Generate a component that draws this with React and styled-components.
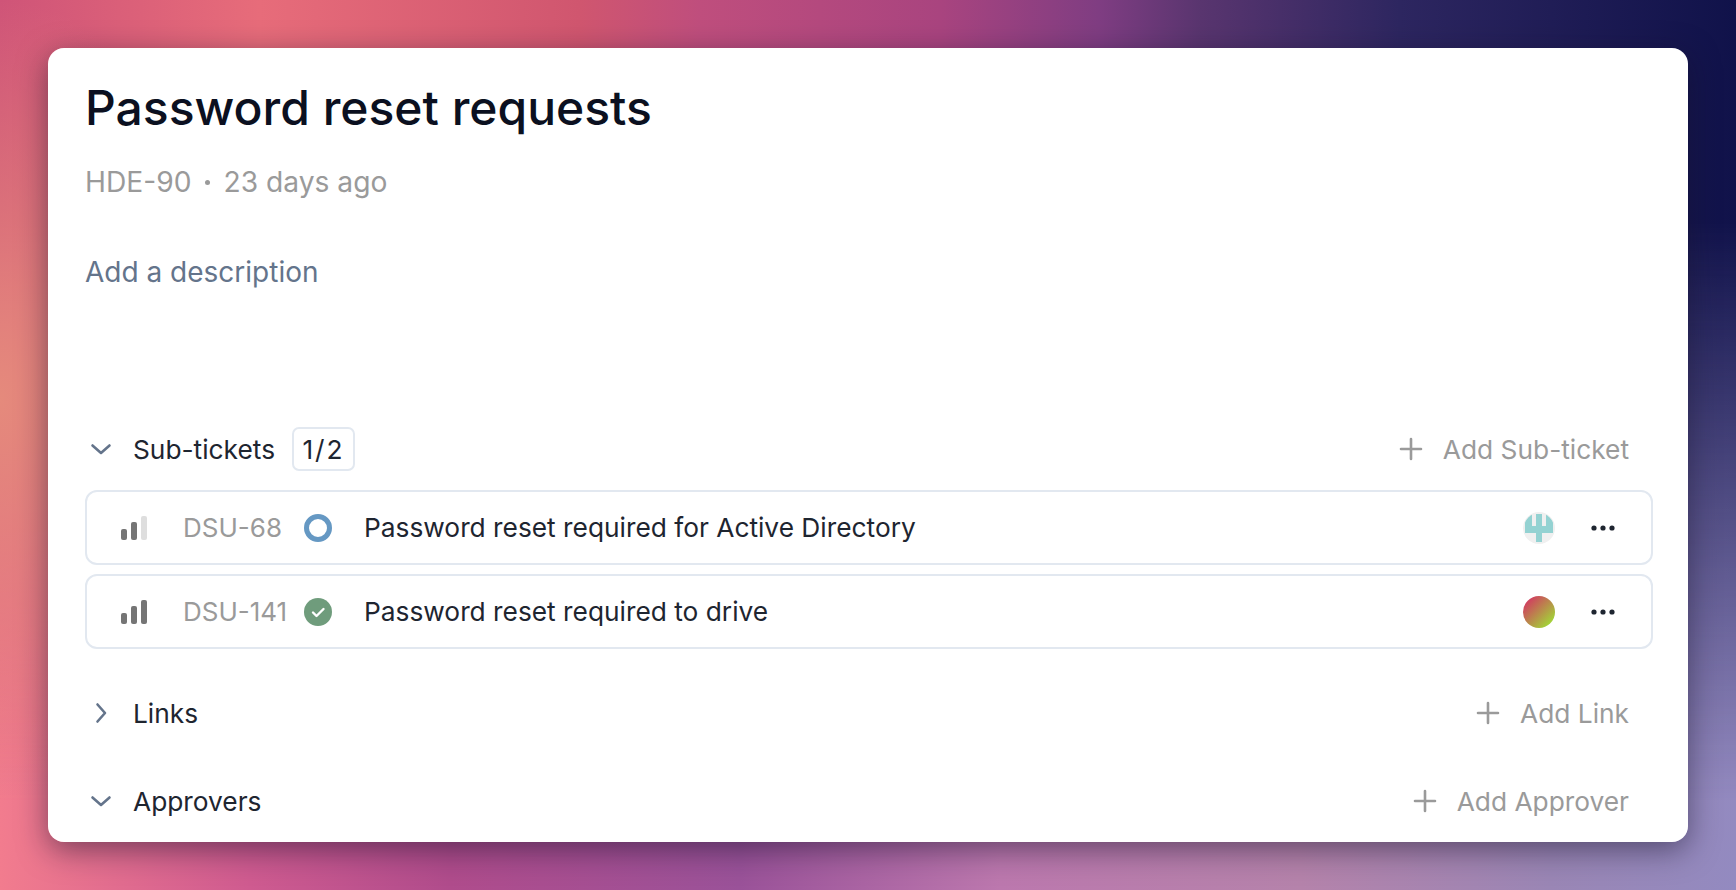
import React from "react";
import styled, { createGlobalStyle } from "styled-components";

const GlobalStyle = createGlobalStyle`
    html, body {
        margin: 0;
        padding: 0;
        height: 100%;
        overflow: hidden;
    }
    body {
        font-family: Inter, "Liberation Sans", sans-serif;
    }
`;

const Page = styled.div`
    position: relative;
    width: 1736px;
    height: 890px;
    box-sizing: border-box;
    padding: 48px;
    background-image: linear-gradient(90deg, #f27c8e 0, #cf5b90 250px, #b04c8c 450px, #9a5299 740px, #bc78ae 1000px, #b583ab 1300px, #9a86b5 1550px, #938ac0 1736px);

    /* top colours fade out into the bottom ones */
    &::before {
        content: "";
        position: absolute;
        inset: 0;
        background: linear-gradient(90deg, #cf5478 0, #e76c7a 260px, #d0566f 580px, #bf4e7d 700px, #a9447f 940px, #7f3d82 1100px, #59356f 1200px, #2d2660 1400px, #10124a 1736px);
        mask-image: linear-gradient(180deg, #000 0, #000 25%, transparent 90%);
    }

    /* coral patch on the left edge */
    &::after {
        content: "";
        position: absolute;
        inset: 0;
        background: radial-gradient(240px 400px at 0px 400px, #e58a7c 0%, rgba(229, 138, 124, 0) 100%);
    }
`;

const CardShadow = styled.div`
    position: relative;
    z-index: 1;
    border-radius: 16px;
    box-shadow: 0 8px 30px rgba(20, 15, 40, 0.5);
`;

const Card = styled.div`
    width: 1640px;
    height: 794px;
    box-sizing: border-box;
    padding: 28px 35px 0 37px;
    background: #fff;
    border-radius: 16px;
    overflow: hidden;
`;

const Title = styled.h1`
    margin: 0;
    height: 64px;
    font-size: 48px;
    line-height: 64px;
    font-weight: 500;
    color: #0b1020;
`;

const Meta = styled.div`
    display: flex;
    align-items: center;
    gap: 13.5px;
    margin-top: 24px;
    height: 36px;
    font-size: 28.2px;
    line-height: 36px;
    color: #9a9a9a;
`;

const MetaDot = styled.span`
    width: 5px;
    height: 5px;
    border-radius: 50%;
    background: #9a9a9a;
`;

const Description = styled.div`
    margin-top: 54px;
    height: 36px;
    font-size: 28px;
    line-height: 36px;
    color: #64748b;
`;

const Section = styled.div`
    display: flex;
    align-items: center;
    height: 44px;
    margin-top: ${(props) => props.$top}px;
    padding-right: 24px;
`;

const Toggle = styled.span`
    display: flex;
    justify-content: center;
    width: 32px;
    margin-right: 16px;
    color: #64748b;
`;

const SectionName = styled.span`
    font-size: 26.3px;
    font-weight: 400;
    color: #1e2530;
`;

const Count = styled.span`
    display: flex;
    align-items: center;
    justify-content: center;
    box-sizing: border-box;
    width: 63px;
    height: 44px;
    margin-left: 17px;
    border: 2px solid #e2e8f0;
    border-radius: 7px;
    font-size: 26.3px;
    letter-spacing: 2px;
    color: #1e2530;
`;

const AddButton = styled.span`
    display: flex;
    align-items: center;
    gap: 20px;
    margin-left: auto;
    font-size: 26.3px;
    color: #9a9a9a;
`;

const Rows = styled.div`
    display: flex;
    flex-direction: column;
    gap: 9px;
    margin-top: 19px;
`;

const Row = styled.div`
    display: flex;
    align-items: center;
    box-sizing: border-box;
    height: 75px;
    padding: 0 36px 0 33px;
    border: 2px solid #e2e8f0;
    border-radius: 12px;
`;

const Code = styled.span`
    width: 121px;
    margin-left: 35px;
    font-size: 26px;
    color: #9a9a9a;
`;

const Name = styled.span`
    margin-left: 32px;
    font-size: 26.3px;
    color: #1e2530;
`;

const Avatar = styled.span`
    display: flex;
    margin-left: auto;
    margin-right: 36px;
`;

const Dots = () => (
    <svg width="24" height="6" viewBox="0 0 24 6" fill="#1e2530">
        <circle cx="3" cy="3" r="2.6" />
        <circle cx="12" cy="3" r="2.6" />
        <circle cx="21" cy="3" r="2.6" />
    </svg>
);

const Chevron = ({ open }) => (
    <svg width="22" height="22" viewBox="0 0 22 22" fill="none" stroke="currentColor" strokeWidth="2.6" strokeLinecap="round" strokeLinejoin="round">
        <path d={open ? "M2.5 7.5 L11 15 L19.5 7.5" : "M7.5 2.5 L15 11 L7.5 19.5"} />
    </svg>
);

const Plus = () => (
    <svg width="24" height="24" viewBox="0 0 24 24" fill="none" stroke="#9a9a9a" strokeWidth="2.6" strokeLinecap="round">
        <path d="M12 2 V22 M2 12 H22" />
    </svg>
);

const Priority = ({ level }) => (
    <svg width="28" height="24" viewBox="0 0 28 24">
        <rect x="1" y="13" width="6" height="11" rx="2" fill="#757575" />
        <rect x="11" y="6" width="6" height="18" rx="2" fill="#757575" />
        <rect x="21" y="0" width="6" height="24" rx="2" fill={level === 3 ? "#757575" : "#dedede"} />
    </svg>
);

const StatusOpen = () => (
    <svg width="28" height="28" viewBox="0 0 28 28" fill="none">
        <circle cx="14" cy="14" r="11.5" stroke="#6598c3" strokeWidth="5" />
    </svg>
);

const StatusDone = () => (
    <svg width="28" height="28" viewBox="0 0 28 28" fill="none">
        <circle cx="14" cy="14" r="14" fill="#6f9c7c" />
        <path d="M9 14.5 L12.5 18 L19.5 11" stroke="#fff" strokeWidth="2.4" strokeLinecap="round" strokeLinejoin="round" />
    </svg>
);

const AvatarTrident = () => (
    <svg width="32" height="32" viewBox="0 0 32 32">
        <defs>
            <clipPath id="avatarClip">
                <circle cx="16" cy="16" r="15" />
            </clipPath>
        </defs>
        <circle cx="16" cy="16" r="16" fill="#f0f0f0" />
        <path
            d="M2 2 H9 V14 H13 V2 H19 V14 H23 V2 H30 V21 H19 V30 H13 V21 H2 Z"
            fill="#94d2d2"
            clipPath="url(#avatarClip)"
        />
    </svg>
);

const AvatarGradient = () => (
    <svg width="32" height="32" viewBox="0 0 32 32">
        <defs>
            <linearGradient id="avatarFill" x1="0.15" y1="0.15" x2="0.85" y2="0.85">
                <stop offset="0" stopColor="#d0415f" />
                <stop offset="1" stopColor="#a3d238" />
            </linearGradient>
        </defs>
        <circle cx="16" cy="16" r="16" fill="url(#avatarFill)" />
    </svg>
);

function App() {
    return (
        <Page>
            <GlobalStyle />
            <CardShadow>
                <Card>
                    <Title>Password reset requests</Title>
                    <Meta>
                        <span>HDE-90</span>
                        <MetaDot />
                        <span>23 days ago</span>
                    </Meta>
                    <Description>Add a description</Description>

                    <Section $top={137}>
                        <Toggle><Chevron open /></Toggle>
                        <SectionName>Sub-tickets</SectionName>
                        <Count>1/2</Count>
                        <AddButton><Plus />Add Sub-ticket</AddButton>
                    </Section>
                    <Rows>
                        <Row>
                            <Priority level={2} />
                            <Code>DSU-68</Code>
                            <StatusOpen />
                            <Name>Password reset required for Active Directory</Name>
                            <Avatar><AvatarTrident /></Avatar>
                            <Dots />
                        </Row>
                        <Row>
                            <Priority level={3} />
                            <Code>DSU-141</Code>
                            <StatusDone />
                            <Name>Password reset required to drive</Name>
                            <Avatar><AvatarGradient /></Avatar>
                            <Dots />
                        </Row>
                    </Rows>

                    <Section $top={42}>
                        <Toggle><Chevron /></Toggle>
                        <SectionName>Links</SectionName>
                        <AddButton><Plus />Add Link</AddButton>
                    </Section>
                    <Section $top={44}>
                        <Toggle><Chevron open /></Toggle>
                        <SectionName>Approvers</SectionName>
                        <AddButton><Plus />Add Approver</AddButton>
                    </Section>
                </Card>
            </CardShadow>
        </Page>
    );
}

export default App;
